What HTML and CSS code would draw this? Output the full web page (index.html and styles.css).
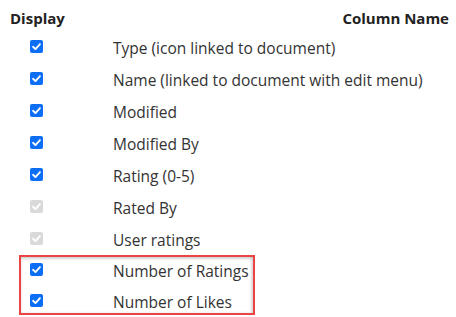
FILE: index.html
```html
<!DOCTYPE html>
<html lang="en">
<head>
    <meta charset="UTF-8">
    <title>Columns</title>
    <link rel="stylesheet" href="styles.css">
</head>
<body>
    <div class="container">
        <div class="head">
            <span class="col-display">Display</span>
            <span class="col-name">Column Name</span>
        </div>
        <div class="row"><span class="cb"><svg viewBox="0 0 14 14"><path d="M3.3 7.3 L5.9 9.8 L10.7 4.4"/></svg></span><span class="label">Type (icon linked to document)</span></div>
        <div class="row"><span class="cb"><svg viewBox="0 0 14 14"><path d="M3.3 7.3 L5.9 9.8 L10.7 4.4"/></svg></span><span class="label">Name (linked to document with edit menu)</span></div>
        <div class="row"><span class="cb"><svg viewBox="0 0 14 14"><path d="M3.3 7.3 L5.9 9.8 L10.7 4.4"/></svg></span><span class="label">Modified</span></div>
        <div class="row"><span class="cb"><svg viewBox="0 0 14 14"><path d="M3.3 7.3 L5.9 9.8 L10.7 4.4"/></svg></span><span class="label">Modified By</span></div>
        <div class="row"><span class="cb"><svg viewBox="0 0 14 14"><path d="M3.3 7.3 L5.9 9.8 L10.7 4.4"/></svg></span><span class="label">Rating (0-5)</span></div>
        <div class="row"><span class="cb disabled"><svg viewBox="0 0 14 14"><path d="M3.3 7.3 L5.9 9.8 L10.7 4.4"/></svg></span><span class="label">Rated By</span></div>
        <div class="row"><span class="cb disabled"><svg viewBox="0 0 14 14"><path d="M3.3 7.3 L5.9 9.8 L10.7 4.4"/></svg></span><span class="label">User ratings</span></div>
        <div class="highlight">
            <div class="row"><span class="cb"><svg viewBox="0 0 14 14"><path d="M3.3 7.3 L5.9 9.8 L10.7 4.4"/></svg></span><span class="label">Number of Ratings</span></div>
            <div class="row"><span class="cb"><svg viewBox="0 0 14 14"><path d="M3.3 7.3 L5.9 9.8 L10.7 4.4"/></svg></span><span class="label">Number of Likes</span></div>
        </div>
    </div>
</body>
</html>
```
FILE: styles.css
```css
body {
    margin: 0;
    background-color: #fff;
    font-family: "Open Sans", "Noto Sans", sans-serif;
    color: #333;
}
.container {
    padding: 7px 7px 0 10px;
}
.head {
    display: flex;
    justify-content: space-between;
    font-weight: bold;
    font-size: 15px;
    color: #222;
    height: 23px;
    line-height: 22px;
}
.row {
    display: flex;
    align-items: center;
    height: 32px;
}
.cb {
    width: 13px;
    height: 13px;
    margin-left: 20px;
    margin-right: 70px;
    border-radius: 2px;
    background-color: #0b6ef5;
    display: flex;
}
.cb svg {
    width: 13px;
    height: 13px;
}
.cb path {
    fill: none;
    stroke: white;
    stroke-width: 2;
    stroke-linecap: round;
    stroke-linejoin: round;
}
.cb.disabled {
    background-color: #d9d9d9;
}
.label {
    font-size: 15.5px;
    color: #333;
    padding-top: 3px;
}
.highlight {
    width: 236px;
    height: 60px;
    box-sizing: border-box;
    margin-left: 9px;
    margin-top: 1px;
    border: 2.5px solid #ec4343;
    box-shadow: inset 0 2px 3px rgba(0, 0, 0, 0.15), inset -2px 0 3px rgba(0, 0, 0, 0.12);
    display: flex;
    flex-direction: column;
    gap: 7px;
}
.highlight .row {
    height: 24px;
    margin-top: 0;
}
.highlight .cb {
    margin-left: 9px;
}
```
